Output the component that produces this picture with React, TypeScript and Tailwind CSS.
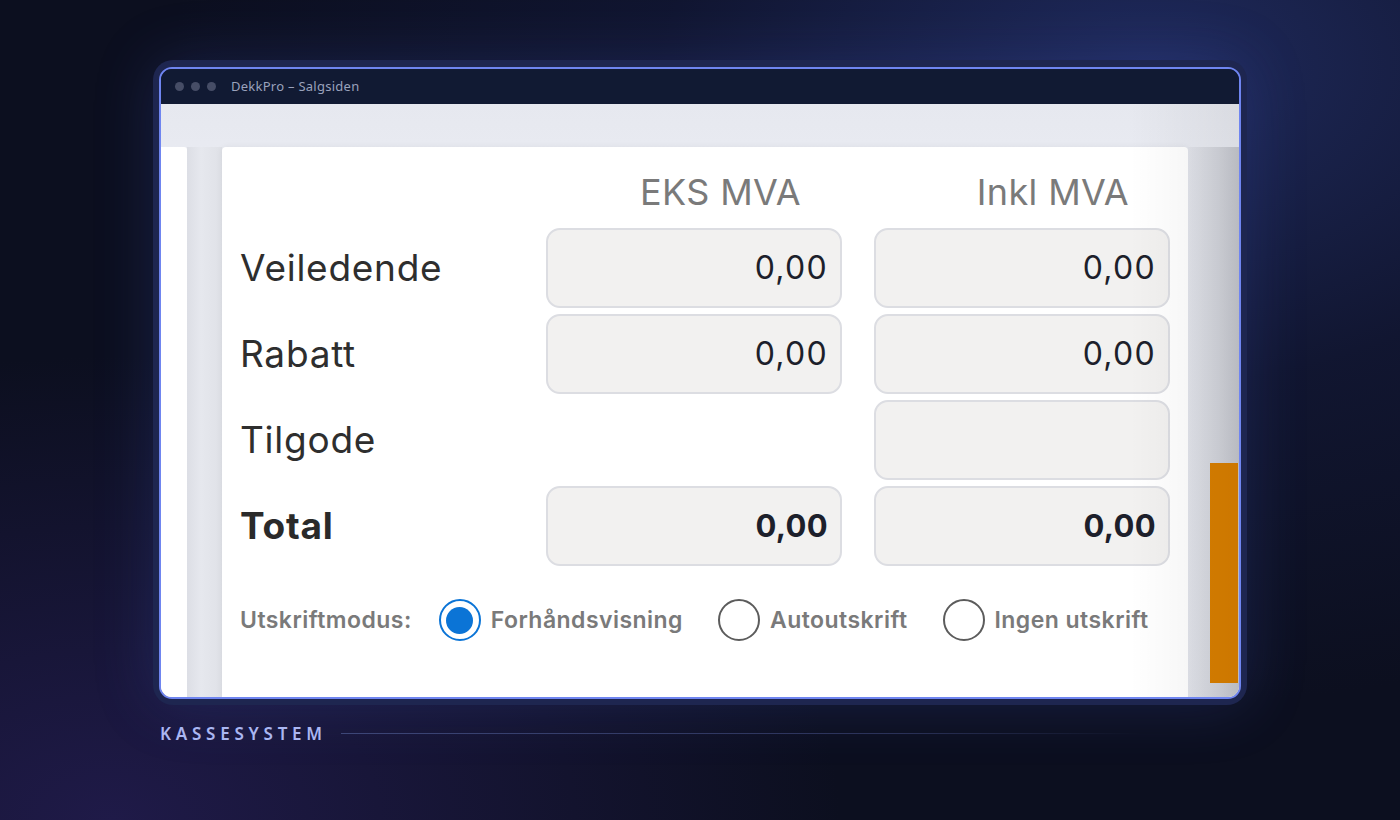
import { type ReactNode } from "react";

const rows = [
  { label: "Veiledende", eks: "0,00", inkl: "0,00" },
  { label: "Rabatt", eks: "0,00", inkl: "0,00" },
  { label: "Tilgode", eks: null, inkl: "" },
  { label: "Total", eks: "0,00", inkl: "0,00", bold: true },
];

const modes = [
  { label: "Forhåndsvisning", checked: true },
  { label: "Autoutskrift", checked: false },
  { label: "Ingen utskrift", checked: false },
];

function ValueBox({ value, bold }: { value: string; bold?: boolean }) {
  return (
    <div className="flex h-[80px] items-center justify-end rounded-[14px] border-2 border-[#dcdde2] bg-[#f2f1f0] pr-[12px]">
      <span
        className={
          bold
            ? "text-[31px] font-bold tracking-[0.01em] text-[#1d1f2b]"
            : "text-[32px] font-normal tracking-[0.04em] text-[#1d1f2b]"
        }
      >
        {value}
      </span>
    </div>
  );
}

function Radio({ checked, children }: { checked: boolean; children: ReactNode }) {
  return (
    <label className="flex items-center gap-[10px]">
      {checked ? (
        <span className="flex h-[42px] w-[42px] items-center justify-center rounded-full border-2 border-[#0b74d6] bg-white">
          <span className="h-[27px] w-[27px] rounded-full bg-[#0b74d6]" />
        </span>
      ) : (
        <span className="h-[42px] w-[42px] rounded-full border-2 border-[#5c5c5c] bg-white" />
      )}
      <span className="text-[23px] font-semibold tracking-[0.02em] text-[#7a7a7a]">
        {children}
      </span>
    </label>
  );
}

export default function App() {
  return (
    <div className="h-[820px] w-full overflow-hidden bg-[#0c0f1f] bg-[radial-gradient(ellipse_at_82%_8%,#1f2a5c_0%,rgba(20,26,60,0.6)_30%,transparent_60%),radial-gradient(ellipse_at_8%_100%,#1f1a48_0%,transparent_40%)] pl-[153px] pt-[60px] font-['Noto_Sans',sans-serif]">
      {/* window */}
      <div className="w-[1094px] rounded-[20px] bg-[#1e2650] p-[6px] pt-[7px] shadow-[0_0_60px_rgba(70,90,200,0.22)]">
        <div className="overflow-hidden rounded-[13px] border-2 border-[#6f85f0]">
          <div className="flex h-[35px] items-center bg-[#111a33] pl-[14px]">
            <div className="flex gap-[7px]">
              <span className="h-[9px] w-[9px] rounded-full bg-[#464d66]" />
              <span className="h-[9px] w-[9px] rounded-full bg-[#464d66]" />
              <span className="h-[9px] w-[9px] rounded-full bg-[#464d66]" />
            </div>
            <span className="ml-[15px] text-[13px] tracking-[0.02em] text-[#9aa2bc]">
              DekkPro – Salgsiden
            </span>
          </div>

          <div className="relative flex h-[593px] bg-[#e8eaf1] bg-[linear-gradient(to_bottom,#e6e8ef,#e9ebf2_60px)] pt-[43px]">
            <div className="w-[26px] rounded-tr-[3px] bg-white" />
            <div className="w-[35px] bg-[linear-gradient(to_right,#dcdee5,#e6e8ee_40%,#dfe1e7)]" />

            <div className="w-[966px] rounded-t-[4px] bg-white px-[18px] pt-[15px] font-['Inter',sans-serif] shadow-[0_0_6px_rgba(0,0,0,0.06)]">
              <div className="grid grid-cols-[1fr_296px_296px] gap-x-[32px] gap-y-[6px]">
                <div className="h-[60px]" />
                <div className="flex h-[60px] items-center justify-end pr-[41px] text-[36px] tracking-[0.01em] text-[#7a7a7a]">
                  EKS MVA
                </div>
                <div className="flex h-[60px] items-center justify-end pr-[41px] text-[36px] tracking-[0.01em] text-[#7a7a7a]">
                  Inkl MVA
                </div>

                {rows.map((row) => (
                  <div key={row.label} className="contents">
                    <div
                      className={
                        row.bold
                          ? "flex h-[80px] items-center text-[37px] font-bold tracking-[0.02em] text-[#2a2a2a]"
                          : "flex h-[80px] items-center text-[37px] font-normal tracking-[0.02em] text-[#2e2e2e]"
                      }
                    >
                      {row.label}
                    </div>
                    {row.eks === null ? (
                      <div />
                    ) : (
                      <ValueBox value={row.eks} bold={row.bold} />
                    )}
                    <ValueBox value={row.inkl} bold={row.bold} />
                  </div>
                ))}
              </div>

              <div className="mt-[33px] flex items-center">
                <span className="mr-[27px] text-[23px] font-semibold tracking-[0.02em] text-[#7a7a7a]">
                  Utskriftmodus:
                </span>
                <div className="flex items-center gap-[35px]">
                  {modes.map((m) => (
                    <Radio key={m.label} checked={m.checked}>
                      {m.label}
                    </Radio>
                  ))}
                </div>
              </div>
            </div>

            <div className="flex flex-1 flex-col bg-[linear-gradient(to_right,#e1e3ea,#d2d4db_60%,#c4c6cd)] pl-[22px] pt-[316px]">
              <div className="h-[220px] w-[28px] bg-[#d97f00]" />
            </div>

            <div className="pointer-events-none absolute right-0 top-0 h-full w-[110px] bg-[linear-gradient(to_left,rgba(0,0,0,0.06),transparent)]" />
          </div>
        </div>
      </div>

      <div className="mt-[16px] flex items-center">
        <span className="ml-[7px] text-[17px] font-semibold tracking-[0.28em] text-[#aab6f2]">
          KASSESYSTEM
        </span>
        <span className="ml-[14px] h-px w-[800px] bg-[linear-gradient(to_right,#3d4678,#2a3158_70%,transparent)]" />
      </div>
    </div>
  );
}
